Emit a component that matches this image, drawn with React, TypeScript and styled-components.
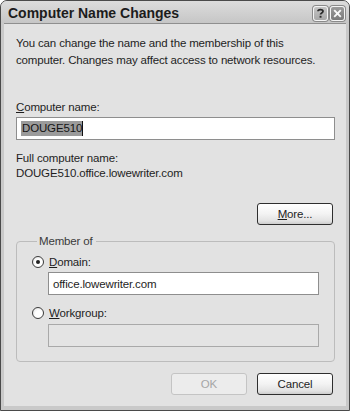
import React from "react";
import styled, { createGlobalStyle } from "styled-components";

const GlobalStyle = createGlobalStyle`
  html, body {
    margin: 0;
    padding: 0;
    background: #ffffff;
  }
  body {
    font-family: "Liberation Sans", Arial, sans-serif;
  }
`;

const Window = styled.div`
  width: 350px;
  height: 411px;
  box-sizing: border-box;
  display: flex;
  flex-direction: column;
  background: #c9c9c9;
  border: 1px solid #4a4a4a;
  border-radius: 7px 7px 0 0;
  overflow: hidden;
`;

const TitleBar = styled.div`
  height: 22px;
  flex: none;
  display: flex;
  align-items: center;
  justify-content: space-between;
  padding: 0 4px 0 7px;
  background: linear-gradient(#dcdcdc, #cfcfcf 60%, #c6c6c6);
`;

const Title = styled.span`
  font-size: 14px;
  font-weight: bold;
  color: #1c1c1c;
  margin-top: 1px;
`;

const TitleButtons = styled.div`
  display: flex;
  gap: 2px;
  margin-top: 2px;
`;

const CaptionButton = styled.div<{ $dark?: boolean }>`
  width: 13px;
  height: 13px;
  border: 1px solid #f4f4f4;
  border-radius: 3px;
  display: flex;
  align-items: center;
  justify-content: center;
  background: ${(p) =>
    p.$dark
      ? "linear-gradient(#9c9c9c, #7a7a7a)"
      : "linear-gradient(#c4c4c4, #a8a8a8)"};
  box-shadow: 0 0 0 1px #8a8a8a;
`;

const Client = styled.div`
  flex: 1;
  margin: 0 3px 4px 3px;
  background: #e2e2e2;
  border-top: 1px solid #8f8f8f;
  display: flex;
  flex-direction: column;
  padding: 0 11px 0 12px;
  font-size: 11.5px;
  letter-spacing: -0.15px;
  color: #1e1e1e;
`;

const Intro = styled.p`
  margin: 11px 0 0 0;
  line-height: 17px;
  white-space: nowrap;
`;

const Label = styled.div<{ $gap?: number }>`
  line-height: 15px;
  margin-top: ${(p) => p.$gap ?? 0}px;
  white-space: nowrap;
`;

const TextBox = styled.div<{ $disabled?: boolean; $top?: number }>`
  height: 23px;
  box-sizing: border-box;
  margin-top: ${(p) => p.$top ?? 0}px;
  border: 1px solid ${(p) => (p.$disabled ? "#a9a9a9" : "#8e8e8e")};
  background: ${(p) => (p.$disabled ? "#e4e4e4" : "#ffffff")};
  display: flex;
  align-items: center;
  padding-left: 4px;
  color: #1e1e1e;
`;

const Selected = styled.span`
  background: #9b9b9b;
  color: #151515;
  line-height: 15px;
  padding: 0 0 0 1px;
`;

const Caret = styled.span`
  display: inline-block;
  width: 1px;
  height: 15px;
  background: #111;
`;

const ButtonRow = styled.div<{ $top: number }>`
  display: flex;
  justify-content: flex-end;
  gap: 10px;
  margin-top: ${(p) => p.$top}px;
  padding-right: 2px;
`;

const PushButton = styled.button<{ $disabled?: boolean }>`
  width: 76px;
  height: 22px;
  box-sizing: border-box;
  padding: 0;
  font-family: inherit;
  font-size: 11.5px;
  letter-spacing: -0.15px;
  border-radius: 3px;
  border: 1px solid ${(p) => (p.$disabled ? "#c4c4c4" : "#2e2e2e")};
  color: ${(p) => (p.$disabled ? "#a6a6a6" : "#1e1e1e")};
  background: ${(p) =>
    p.$disabled
      ? "#ececec"
      : "linear-gradient(#ffffff, #f3f3f3 50%, #e2e2e2 85%, #cdcdcd)"};
`;

const Group = styled.fieldset`
  margin: 9px 0 0 0;
  min-width: 0;
  border: 1px solid #bcbcbc;
  border-radius: 4px;
  padding: 5px 15px 14px 15px;
  display: flex;
  flex-direction: column;
`;

const Legend = styled.legend`
  padding: 0 3px 0 2px;
  margin-left: 5px;
  line-height: 15px;
  color: #3a3a3a;
`;

const RadioRow = styled.label<{ $top?: number }>`
  display: flex;
  align-items: center;
  gap: 5px;
  height: 15px;
  margin-top: ${(p) => p.$top ?? 0}px;
`;

const RadioCircle = styled.span<{ $checked?: boolean }>`
  width: 12px;
  height: 12px;
  box-sizing: border-box;
  border-radius: 50%;
  border: 1px solid #3c3c3c;
  background: radial-gradient(circle at 60% 60%, #ffffff 40%, #dcdcdc);
  display: flex;
  align-items: center;
  justify-content: center;

  &::after {
    content: "";
    width: 4px;
    height: 4px;
    border-radius: 50%;
    background: ${(p) => (p.$checked ? "#222" : "transparent")};
  }
`;

const Indented = styled.div`
  margin-left: 16px;
`;

export default function App() {
  return (
    <>
      <GlobalStyle />
      <Window>
        <TitleBar>
          <Title>Computer Name Changes</Title>
          <TitleButtons>
            <CaptionButton>
              <svg width="9" height="10" viewBox="0 0 9 10">
                <path
                  d="M2 3.2 C2 1.2 7 0.8 7 3.2 C7 5 4.5 4.8 4.5 6.6"
                  fill="none"
                  stroke="#2a2a2a"
                  strokeWidth="1.8"
                />
                <rect x="3.6" y="7.8" width="1.9" height="1.9" fill="#2a2a2a" />
              </svg>
            </CaptionButton>
            <CaptionButton $dark>
              <svg width="9" height="9" viewBox="0 0 9 9">
                <path
                  d="M1.2 1.2 L7.8 7.8 M7.8 1.2 L1.2 7.8"
                  stroke="#f8f8f8"
                  strokeWidth="1.9"
                />
              </svg>
            </CaptionButton>
          </TitleButtons>
        </TitleBar>
        <Client>
          <Intro>
            You can change the name and the membership of this
            <br />
            computer. Changes may affect access to network resources.
          </Intro>
          <Label $gap={31}>
            <u>C</u>omputer name:
          </Label>
          <TextBox $top={2}>
            <Selected>DOUGE510</Selected>
            <Caret />
          </TextBox>
          <Label $gap={11}>Full computer name:</Label>
          <Label>DOUGE510.office.lowewriter.com</Label>
          <ButtonRow $top={22}>
            <PushButton>
              <u>M</u>ore...
            </PushButton>
          </ButtonRow>
          <Group>
            <Legend>Member of</Legend>
            <RadioRow>
              <RadioCircle $checked />
              <span>
                <u>D</u>omain:
              </span>
            </RadioRow>
            <Indented>
              <TextBox $top={3}>office.lowewriter.com</TextBox>
            </Indented>
            <RadioRow $top={10}>
              <RadioCircle />
              <span>
                <u>W</u>orkgroup:
              </span>
            </RadioRow>
            <Indented>
              <TextBox $top={4} $disabled />
            </Indented>
          </Group>
          <ButtonRow $top={11}>
            <PushButton $disabled>OK</PushButton>
            <PushButton>Cancel</PushButton>
          </ButtonRow>
        </Client>
      </Window>
    </>
  );
}
